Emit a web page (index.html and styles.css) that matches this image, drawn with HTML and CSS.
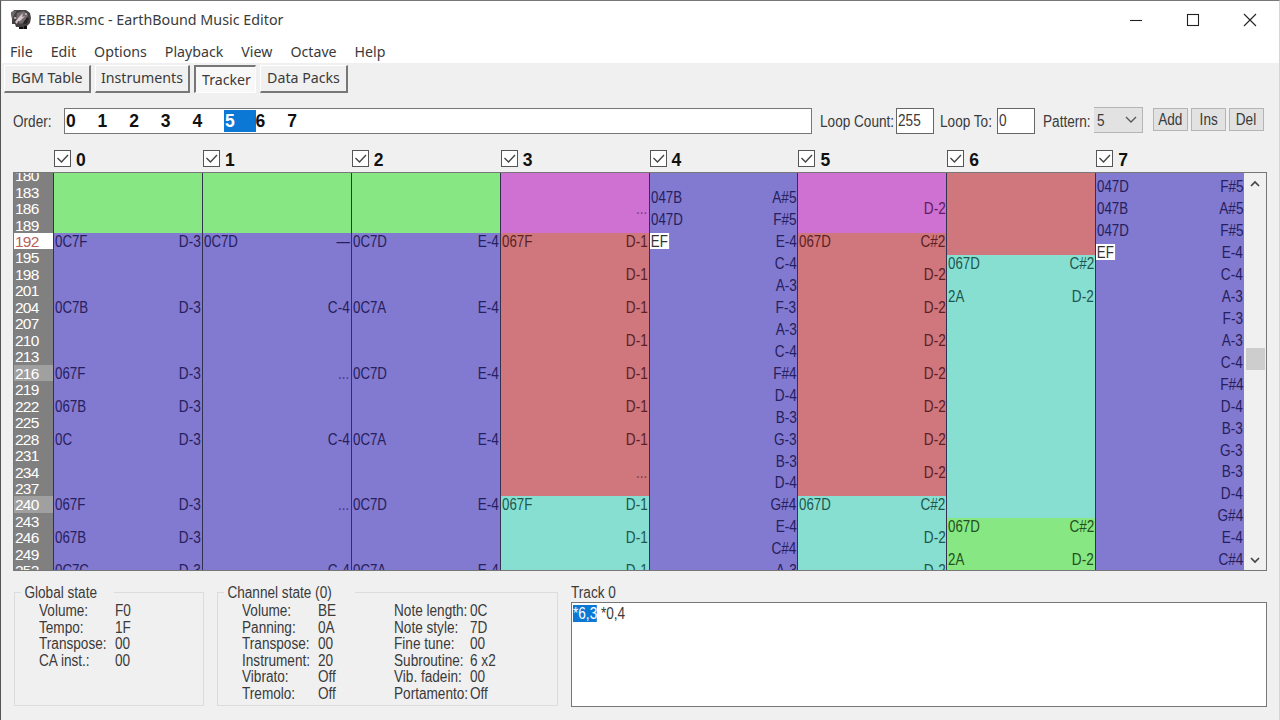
FILE: index.html
```html
<!DOCTYPE html>
<html lang="en">
<head>
    <meta charset="UTF-8">
    <title>EBBR.smc - EarthBound Music Editor</title>
    <link rel="stylesheet" href="styles.css">
</head>
<body>
<div class="window">
    <div class="titlebar">
        <svg class="logo" width="22" height="22" viewBox="0 0 22 22">
            <path d="M4 1h12l4 3 1 5-1 5-3 3v3H9v-2H6l-1-3H2V9L1 5z" fill="#454042"/>
            <path d="M1 3l6-2-3 5-2 5z" fill="#6d696b"/>
            <path d="M7 4l7-2 4 4-2 7-6 2-4-5z" fill="#736b6f"/>
            <path d="M5 13l4-5 4-4-1 4 3-1-5 5-2 0-1 3z" fill="#d8c8ce"/>
            <path d="M13 14l4-6 2 2-3 5z" fill="#262324"/>
            <path d="M9 18h4v2H9zM14 17h3v3h-3z" fill="#111"/>
            <path d="M15 4h2v2h-2zM4 8h2v2H4z" fill="#aaa"/>
        </svg>
        <span class="title">EBBR.smc - EarthBound Music Editor</span>
        <svg class="controls" width="128" height="16" viewBox="0 0 128 16" fill="none" stroke="#222" stroke-width="1.1">
            <path d="M1 8.500H13"/>
            <rect x="58.500" y="2.500" width="11" height="11"/>
            <path d="M115 2l12 12M127 2l-12 12"/>
        </svg>
    </div>

    <div class="menubar">
        <span>File</span><span>Edit</span><span>Options</span><span>Playback</span><span>View</span><span>Octave</span><span>Help</span>
    </div>

    <div class="tabs">
        <div class="tab bgm">BGM Table</div>
        <div class="tab inst">Instruments</div>
        <div class="tab active">Tracker</div>
        <div class="tab packs">Data Packs</div>
    </div>

    <div class="orderbar">
        <div class="order-label"><span class="sans">Order:</span></div>
        <div class="order">
            <b>0</b><b>1</b><b>2</b><b>3</b><b>4</b><b class="sel">5</b><b>6</b><b>7</b>
        </div>
        <div class="count-label"><span class="sans">Loop Count:</span></div>
        <div class="field"><span class="sans">255</span></div>
        <div class="to-label"><span class="sans">Loop To:</span></div>
        <div class="field"><span class="sans">0</span></div>
        <div class="pattern-label"><span class="sans">Pattern:</span></div>
        <div class="combo"><span class="sans">5</span>
            <svg width="12" height="8" viewBox="0 0 12 8" fill="none" stroke="#555" stroke-width="1.3"><path d="M1 1l5 5 5-5"/></svg>
        </div>
        <div class="btn first"><span class="sans">Add</span></div>
        <div class="btn"><span class="sans">Ins</span></div>
        <div class="btn"><span class="sans">Del</span></div>
    </div>

    <div class="channels">
        <div class="chan"><i class="check"><svg viewBox="0 0 15 15"><path d="M2.500 7l4 4L13 4"/></svg></i><b>0</b></div>
        <div class="chan"><i class="check"><svg viewBox="0 0 15 15"><path d="M2.500 7l4 4L13 4"/></svg></i><b>1</b></div>
        <div class="chan"><i class="check"><svg viewBox="0 0 15 15"><path d="M2.500 7l4 4L13 4"/></svg></i><b>2</b></div>
        <div class="chan"><i class="check"><svg viewBox="0 0 15 15"><path d="M2.500 7l4 4L13 4"/></svg></i><b>3</b></div>
        <div class="chan"><i class="check"><svg viewBox="0 0 15 15"><path d="M2.500 7l4 4L13 4"/></svg></i><b>4</b></div>
        <div class="chan"><i class="check"><svg viewBox="0 0 15 15"><path d="M2.500 7l4 4L13 4"/></svg></i><b>5</b></div>
        <div class="chan"><i class="check"><svg viewBox="0 0 15 15"><path d="M2.500 7l4 4L13 4"/></svg></i><b>6</b></div>
        <div class="chan"><i class="check"><svg viewBox="0 0 15 15"><path d="M2.500 7l4 4L13 4"/></svg></i><b>7</b></div>
    </div>

    <div class="tracker">
        <div class="ruler">
            <div>180</div><div>183</div><div>186</div><div>189</div><div class="now">192</div><div>195</div><div>198</div><div>201</div><div>204</div><div>207</div><div>210</div><div>213</div><div class="beat">216</div><div>219</div><div>222</div><div>225</div><div>228</div><div>231</div><div>234</div><div>237</div><div class="beat">240</div><div>243</div><div>246</div><div>249</div><div>252</div>
        </div>

        <!-- t2..t42 is the number of ticks until the next event -->
        <div class="col">
            <div class="green t12"></div>
            <div class="blue t12"><span>0C7F</span><em>D-3</em></div>
            <div class="blue t12"><span>0C7B</span><em>D-3</em></div>
            <div class="blue t6"><span>067F</span><em>D-3</em></div>
            <div class="blue t6"><span>067B</span><em>D-3</em></div>
            <div class="blue t12"><span>0C</span><em>D-3</em></div>
            <div class="blue t6"><span>067F</span><em>D-3</em></div>
            <div class="blue t6"><span>067B</span><em>D-3</em></div>
            <div class="blue t6"><span>0C7C</span><em>D-3</em></div>
        </div>
        <div class="col">
            <div class="green t12"></div>
            <div class="blue t12"><span>0C7D</span><em class="rest">—</em></div>
            <div class="blue t12"><span></span><em>C-4</em></div>
            <div class="blue t12"><span></span><em class="dots">...</em></div>
            <div class="blue t12"><span></span><em>C-4</em></div>
            <div class="blue t12"><span></span><em class="dots">...</em></div>
            <div class="blue t6"><span></span><em>C-4</em></div>
        </div>
        <div class="col">
            <div class="green t12"></div>
            <div class="blue t12"><span>0C7D</span><em>E-4</em></div>
            <div class="blue t12"><span>0C7A</span><em>E-4</em></div>
            <div class="blue t12"><span>0C7D</span><em>E-4</em></div>
            <div class="blue t12"><span>0C7A</span><em>E-4</em></div>
            <div class="blue t12"><span>0C7D</span><em>E-4</em></div>
            <div class="blue t6"><span>0C7A</span><em>E-4</em></div>
        </div>
        <div class="col">
            <div class="pink t6"></div>
            <div class="pink t6"><span></span><em class="dots">...</em></div>
            <div class="red t6"><span>067F</span><em>D-1</em></div>
            <div class="red t6"><span></span><em>D-1</em></div>
            <div class="red t6"><span></span><em>D-1</em></div>
            <div class="red t6"><span></span><em>D-1</em></div>
            <div class="red t6"><span></span><em>D-1</em></div>
            <div class="red t6"><span></span><em>D-1</em></div>
            <div class="red t6"><span></span><em>D-1</em></div>
            <div class="red t6"><span></span><em class="dots">...</em></div>
            <div class="teal t6"><span>067F</span><em>D-1</em></div>
            <div class="teal t6"><span></span><em>D-1</em></div>
            <div class="teal t6"><span></span><em>D-1</em></div>
        </div>
        <div class="col">
            <div class="blue t4"></div>
            <div class="blue t4"><span>047B</span><em>A#5</em></div>
            <div class="blue t4"><span>047D</span><em>F#5</em></div>
            <div class="blue t4"><span class="end">EF</span><em>E-4</em></div>
            <div class="blue t4"><span></span><em>C-4</em></div>
            <div class="blue t4"><span></span><em>A-3</em></div>
            <div class="blue t4"><span></span><em>F-3</em></div>
            <div class="blue t4"><span></span><em>A-3</em></div>
            <div class="blue t4"><span></span><em>C-4</em></div>
            <div class="blue t4"><span></span><em>F#4</em></div>
            <div class="blue t4"><span></span><em>D-4</em></div>
            <div class="blue t4"><span></span><em>B-3</em></div>
            <div class="blue t4"><span></span><em>G-3</em></div>
            <div class="blue t4"><span></span><em>B-3</em></div>
            <div class="blue t4"><span></span><em>D-4</em></div>
            <div class="blue t4"><span></span><em>G#4</em></div>
            <div class="blue t4"><span></span><em>E-4</em></div>
            <div class="blue t4"><span></span><em>C#4</em></div>
            <div class="blue t4"><span></span><em>A-3</em></div>
        </div>
        <div class="col">
            <div class="pink t6"></div>
            <div class="pink t6"><span></span><em>D-2</em></div>
            <div class="red t6"><span>067D</span><em>C#2</em></div>
            <div class="red t6"><span></span><em>D-2</em></div>
            <div class="red t6"><span></span><em>D-2</em></div>
            <div class="red t6"><span></span><em>D-2</em></div>
            <div class="red t6"><span></span><em>D-2</em></div>
            <div class="red t6"><span></span><em>D-2</em></div>
            <div class="red t6"><span></span><em>D-2</em></div>
            <div class="red t6"><span></span><em>D-2</em></div>
            <div class="teal t6"><span>067D</span><em>C#2</em></div>
            <div class="teal t6"><span></span><em>D-2</em></div>
            <div class="teal t6"><span></span><em>D-2</em></div>
        </div>
        <div class="col">
            <div class="red t16"></div>
            <div class="teal t6"><span>067D</span><em>C#2</em></div>
            <div class="teal t42"><span>2A</span><em>D-2</em></div>
            <div class="green t6"><span>067D</span><em>C#2</em></div>
            <div class="green t6"><span>2A</span><em>D-2</em></div>
        </div>
        <div class="col">
            <div class="blue t2"></div>
            <div class="blue t4"><span>047D</span><em>F#5</em></div>
            <div class="blue t4"><span>047B</span><em>A#5</em></div>
            <div class="blue t4"><span>047D</span><em>F#5</em></div>
            <div class="blue t4"><span class="end">EF</span><em>E-4</em></div>
            <div class="blue t4"><span></span><em>C-4</em></div>
            <div class="blue t4"><span></span><em>A-3</em></div>
            <div class="blue t4"><span></span><em>F-3</em></div>
            <div class="blue t4"><span></span><em>A-3</em></div>
            <div class="blue t4"><span></span><em>C-4</em></div>
            <div class="blue t4"><span></span><em>F#4</em></div>
            <div class="blue t4"><span></span><em>D-4</em></div>
            <div class="blue t4"><span></span><em>B-3</em></div>
            <div class="blue t4"><span></span><em>G-3</em></div>
            <div class="blue t4"><span></span><em>B-3</em></div>
            <div class="blue t4"><span></span><em>D-4</em></div>
            <div class="blue t4"><span></span><em>G#4</em></div>
            <div class="blue t4"><span></span><em>E-4</em></div>
            <div class="blue t4"><span></span><em>C#4</em></div>
        </div>

        <div class="scrollbar">
            <svg width="10" height="8" viewBox="0 0 10 8"><path d="M1 6l4-4 4 4"/></svg>
            <div class="thumb"></div>
            <svg width="10" height="8" viewBox="0 0 10 8"><path d="M1 2l4 4 4-4"/></svg>
        </div>
    </div>

    <div class="bottom">
        <fieldset class="global">
            <legend>Global state</legend>
            <div class="state">
                <span>Volume:</span><span>F0</span>
                <span>Tempo:</span><span>1F</span>
                <span>Transpose:</span><span>00</span>
                <span>CA inst.:</span><span>00</span>
            </div>
        </fieldset>
        <fieldset class="channel">
            <legend>Channel state (0)</legend>
            <div class="state">
                <span>Volume:</span><span>BE</span><span>Note length:</span><span>0C</span>
                <span>Panning:</span><span>0A</span><span>Note style:</span><span>7D</span>
                <span>Transpose:</span><span>00</span><span>Fine tune:</span><span>00</span>
                <span>Instrument:</span><span>20</span><span>Subroutine:</span><span>6 x2</span>
                <span>Vibrato:</span><span>Off</span><span>Vib. fadein:</span><span>00</span>
                <span>Tremolo:</span><span>Off</span><span>Portamento:</span><span>Off</span>
            </div>
        </fieldset>
        <div class="track">
            <div class="track-label"><span class="sans">Track 0</span></div>
            <div class="editor"><span class="sans"><span class="hl">*6,3</span> *0,4</span></div>
        </div>
    </div>
</div>
</body>
</html>
```
FILE: styles.css
```css
* {
    box-sizing: border-box;
}
body {
    margin: 0;
    width: 1280px;
    height: 720px;
    overflow: hidden;
    background: #f0f0f0;
    color: #3a3a3a;
    font-family: "Liberation Sans", Arial, sans-serif;
    font-size: 16px;
}
.window {
    height: 720px;
    padding-left: 1px;
    border-top: 1px solid #777;
    border-left: 1px solid #555;
    border-right: 1px solid #d5d5d5;
}
/* narrow system font */
.sans,
.state span,
.col span,
.col em,
legend {
    display: inline-block;
    white-space: nowrap;
    transform: scaleX(0.85);
    transform-origin: left;
}
.titlebar {
    display: flex;
    align-items: center;
    height: 37px;
    padding: 0 22px 0 8px;
    background: #fff;
}
.title {
    flex: 1;
    margin-left: 6px;
    font-family: "Noto Sans", sans-serif;
    font-size: 14.3px;
}
.menubar {
    display: flex;
    gap: 18px;
    height: 25px;
    padding-left: 8px;
    background: #fff;
    font-family: "Noto Sans", sans-serif;
    font-size: 14.2px;
    line-height: 27px;
}
.tabs {
    display: flex;
    gap: 4px;
    height: 32px;
    padding: 2px 0 0 2px;
    font-family: "Noto Sans", sans-serif;
    font-size: 14.2px;
}
.tab {
    height: 28px;
    line-height: 24px;
    text-align: center;
    white-space: nowrap;
    border: 1px solid #fff;
    border-right: 2px solid #777;
    border-bottom: 2px solid #777;
}
.bgm { width: 87px; }
.inst { width: 95px; }
.packs { width: 88px; }
.active {
    width: 62px;
    padding: 1px 0 0 2px;
    background: #f8f8f8;
    border: 2px solid #777;
    border-right: 1px solid #fff;
    border-bottom: 1px solid #fff;
}
.orderbar {
    display: flex;
    height: 46px;
    padding: 13px 0 0 11px;
    line-height: 27px;
}
.order-label { width: 51px; }
.order {
    display: flex;
    width: 748px;
    height: 26px;
    margin-right: 8px;
    padding: 1px;
    border: 1px solid #777;
    background: #fff;
    font-size: 17.5px;
    line-height: 23px;
    color: #111;
}
.order b {
    width: 31.6px;
}
.order .sel {
    padding-left: 1px;
    background: #0a78d4;
    color: #fff;
}
.count-label { width: 76px; }
.to-label { width: 57px; }
.pattern-label {
    width: 51px;
    margin-left: 2px;
}
.field {
    width: 38px;
    height: 26px;
    margin-right: 6px;
    padding-left: 1px;
    border: 1px solid #666;
    background: #fff;
    line-height: 23px;
}
.combo {
    display: flex;
    align-items: center;
    justify-content: space-between;
    width: 49px;
    height: 26px;
    margin-top: -1px;
    padding: 0 5px 0 3px;
    border: 1px solid #b5b5b5;
    border-left: 0;
    background: #e2e2e2;
}
.btn {
    width: 35px;
    height: 23px;
    margin-right: 3px;
    border: 1px solid #b5b5b5;
    background: #e2e2e2;
    text-align: center;
    line-height: 22px;
}
.btn .sans {
    transform-origin: center;
}
.btn.first { margin-left: 10px; }
.channels {
    display: flex;
    height: 31px;
    padding: 9px 0 0 52px;
}
.chan {
    display: flex;
    width: 148.9px;
    font-size: 17.5px;
    line-height: 20px;
    color: #111;
}
.check {
    width: 17px;
    height: 17px;
    margin-right: 5px;
    border: 1px solid #555;
    background: #fff;
}
.check svg {
    display: block;
    fill: none;
    stroke: #444;
    stroke-width: 1.4;
}
.tracker {
    display: flex;
    width: 1254px;
    height: 399px;
    margin-left: 11px;
    overflow: hidden;
    border: 1px solid #777;
}
.ruler {
    width: 39px;
    margin-top: -5.9px;
    background: #808080;
    color: #fff;
}
.ruler div {
    height: 16.47px;
    line-height: 18px;
    padding-left: 1px;
    font-size: 15.5px;
    letter-spacing: -0.8px;
}
.ruler .now {
    background: #fff;
    color: #b5625a;
}
.ruler .beat {
    background: #a0a0a0;
}
.col {
    width: 148.9px;
    margin-top: -5.9px;
    border-left: 1px solid #333050;
}
.col div {
    display: flex;
    justify-content: space-between;
    padding: 0 1px;
    line-height: 18px;
}
.col span {
    transform: scaleX(0.83);
}
.col em {
    font-style: normal;
    transform-origin: right;
}
.col .dots {
    opacity: 0.7;
}
.col .end {
    height: 16px;
    margin-left: -1px;
    padding: 0 2px 0 1px;
    background: #fff;
    color: #333;
}
.green { background: #87e782; color: #225020; }
.blue { background: #8279d0; color: #26205c; }
.pink { background: #cf70d3; color: #5c2060; }
.red { background: #cf777c; color: #5c2026; }
.teal { background: #87dfd2; color: #20564e; }
.t2 { height: 10.98px; }
.t4 { height: 21.96px; }
.t6 { height: 32.94px; }
.t12 { height: 65.88px; }
.t16 { height: 87.84px; }
.t42 { height: 230.58px; }
.scrollbar {
    display: flex;
    flex-direction: column;
    align-items: center;
    flex: 1;
    padding: 7px 0 6px;
    background: #f0f0f0;
}
.scrollbar svg {
    fill: none;
    stroke: #444;
    stroke-width: 1.7;
}
.thumb {
    width: 19px;
    height: 22px;
    margin: 160px 0 auto;
    background: #cdcdcd;
}
.bottom {
    display: flex;
    padding: 13px 0 0 12px;
}
fieldset {
    height: 122px;
    margin: 0 13px 0 0;
    padding: 0;
    border: 1px solid #dcdcdc;
}
legend {
    height: 17px;
    margin-left: 6px;
    padding: 0 4px;
    line-height: 18px;
    background: #f0f0f0;
}
.global { width: 190px; }
.channel { width: 341px; }
.state {
    display: grid;
    grid-template-columns: 75.5px 76px 76px 60px;
    grid-auto-rows: 16.5px;
    margin: 1px 0 0 24px;
    line-height: 17.5px;
}
.global .state {
    grid-template-columns: 76px 60px;
}
.track {
    width: 696px;
}
.track-label {
    height: 18px;
    line-height: 18px;
}
.editor {
    height: 105px;
    padding: 2px 1px;
    border: 1px solid #777;
    background: #fff;
    line-height: 17px;
}
.hl {
    display: inline-block;
    background: #0a78d4;
    color: #fff;
}
```
